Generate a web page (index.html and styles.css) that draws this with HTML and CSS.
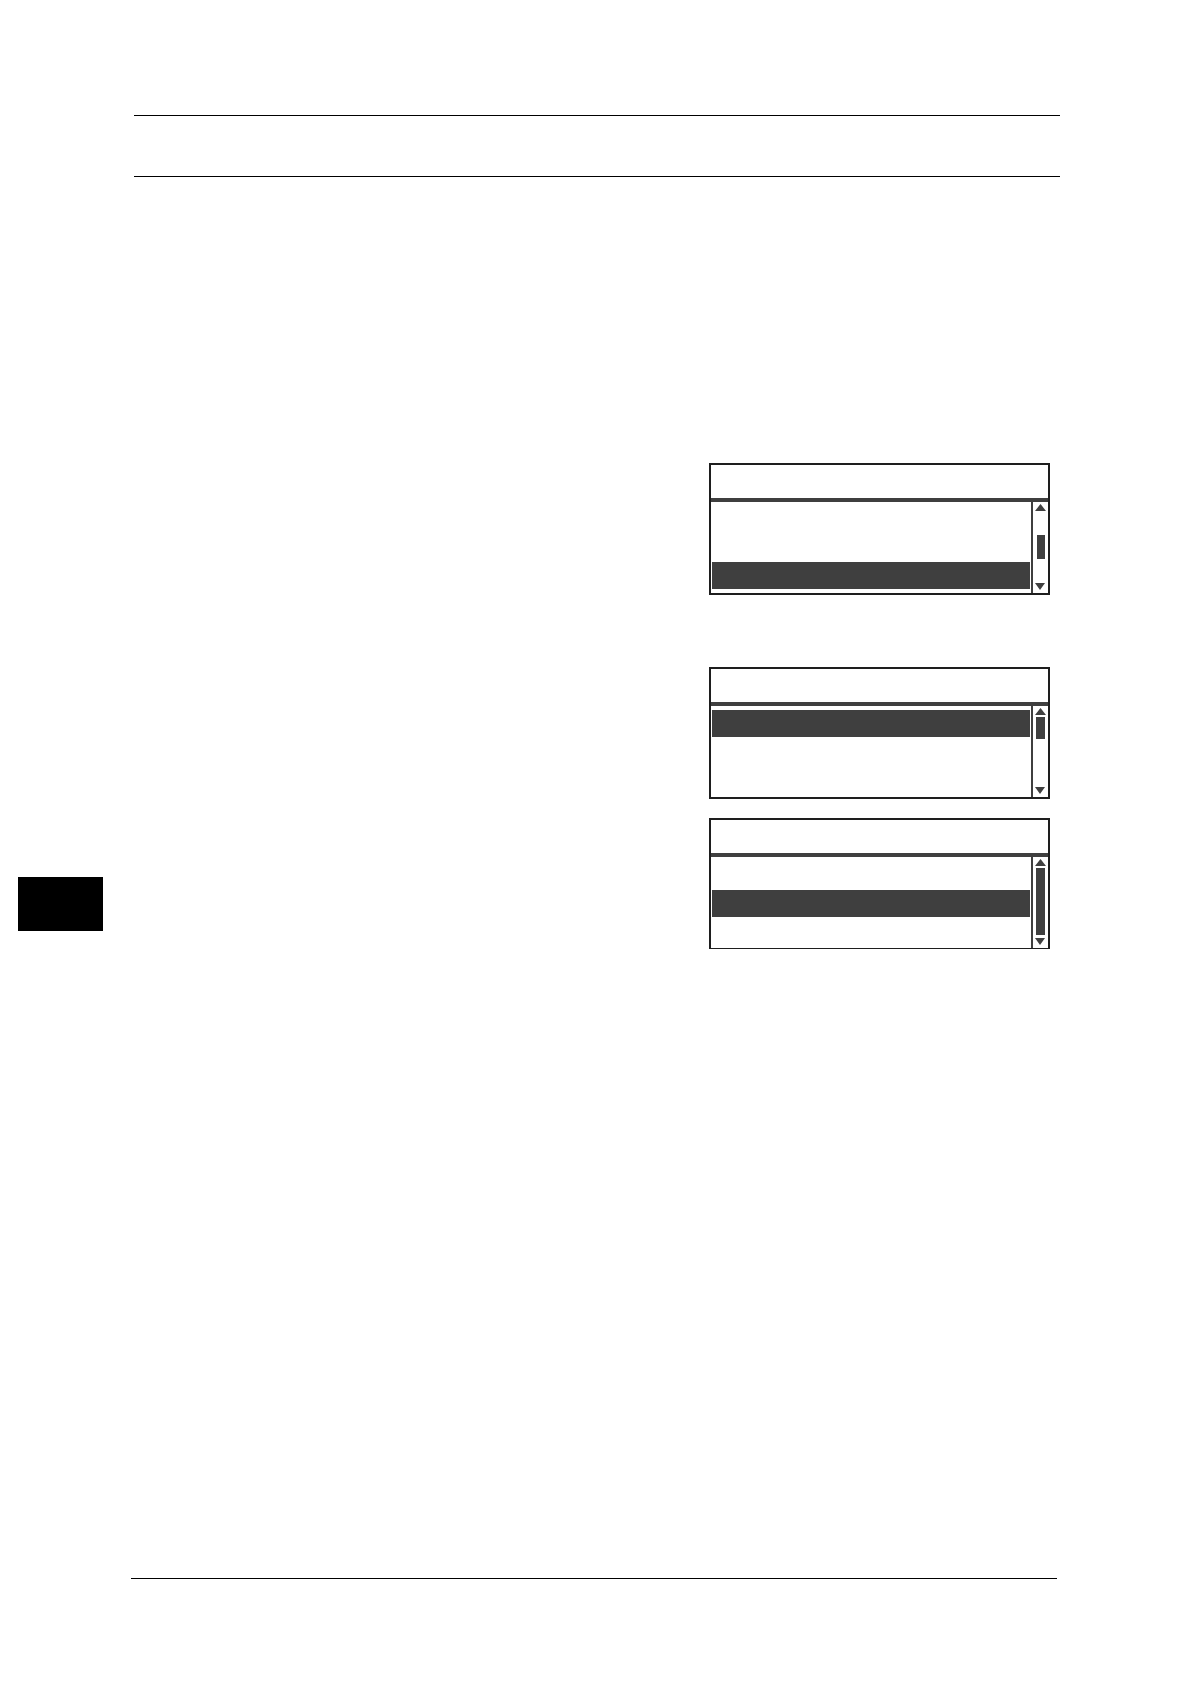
FILE: index.html
```
<!DOCTYPE html>
<html lang="en">
<head>
    <meta charset="UTF-8">
    <meta name="viewport" content="width=device-width, initial-scale=1.0">
    <link rel="stylesheet" href="styles.css">
</head>
<body>
    <header class="page-header"></header>

    <div class="page-body">
        <aside class="chapter-tab"></aside>

        <main class="screens">
            <!-- Last visible row selected -->
            <section class="screen">
                <div class="screen-title"></div>
                <div class="screen-body">
                    <ul class="menu menu-end">
                        <li></li>
                        <li></li>
                        <li class="selected"></li>
                    </ul>
                    <div class="scrollbar">
                        <svg class="arrow" viewBox="0 0 11 7"><path d="M5.5 0L11 7H0z"/></svg>
                        <div class="track"><div class="thumb thumb-middle"></div></div>
                        <svg class="arrow" viewBox="0 0 11 7"><path d="M0 0h10L5 7z"/></svg>
                    </div>
                </div>
            </section>

            <!-- First row selected -->
            <section class="screen screen-next">
                <div class="screen-title"></div>
                <div class="screen-body">
                    <ul class="menu">
                        <li class="selected"></li>
                        <li></li>
                        <li></li>
                    </ul>
                    <div class="scrollbar">
                        <svg class="arrow" viewBox="0 0 11 7"><path d="M5.5 0L11 7H0z"/></svg>
                        <div class="track"><div class="thumb thumb-top"></div></div>
                        <svg class="arrow" viewBox="0 0 11 7"><path d="M0 0h10L5 7z"/></svg>
                    </div>
                </div>
            </section>

            <!-- Second row selected, whole list fits -->
            <section class="screen screen-last">
                <div class="screen-title"></div>
                <div class="screen-body">
                    <ul class="menu">
                        <li></li>
                        <li class="selected"></li>
                        <li></li>
                    </ul>
                    <div class="scrollbar">
                        <svg class="arrow" viewBox="0 0 11 7"><path d="M5.5 0L11 7H0z"/></svg>
                        <div class="track"><div class="thumb thumb-full"></div></div>
                        <svg class="arrow" viewBox="0 0 11 7"><path d="M0 0h10L5 7z"/></svg>
                    </div>
                </div>
            </section>
        </main>
    </div>

    <footer class="page-footer"></footer>
</body>
</html>
```
FILE: styles.css
```
* {
    margin: 0;
    padding: 0;
    box-sizing: border-box;
}

body {
    display: flex;
    flex-direction: column;
    min-height: 100vh;
    padding: 115px 0 105px;
    background: #fff;
    font-family: "Liberation Sans", Arial, sans-serif;
}

.page-header {
    height: 62px;
    margin: 0 130px 0 134px;
    border-top: 1px solid #000;
    border-bottom: 1px solid #000;
}

.page-body {
    display: flex;
    flex: 1;
    justify-content: space-between;
    align-items: flex-start;
    padding: 0 140px 0 18px;
}

.page-footer {
    margin: 0 133px 0 131px;
    border-top: 1px solid #000;
}

.chapter-tab {
    width: 85px;
    height: 54px;
    margin-top: 700px;
    background: #000;
}

/* Printer display panels */
.screens {
    width: 341px;
    padding-top: 286px;
}

.screen {
    border: 2px solid #1e1e1e;
}

.screen-next {
    margin-top: 72px;
}

.screen-last {
    margin-top: 19px;
    border-bottom-width: 1px;
}

.screen-title {
    height: 37px;
    border-bottom: 4px solid #3f3f3f;
}

.screen-body {
    display: flex;
    height: 91px;
}

.menu {
    display: flex;
    flex: 1;
    flex-direction: column;
    gap: 2px;
    padding: 4px 1px;
    list-style: none;
}

.menu-end {
    justify-content: flex-end;
}

.menu li {
    flex: none;
    height: 27px;
}

.menu .selected {
    background: #3f3f3f;
}

.scrollbar {
    display: flex;
    flex-direction: column;
    align-items: center;
    width: 17px;
    padding: 2px 0 3px;
    border-left: 2px solid #3f3f3f;
}

.arrow {
    flex: none;
    width: 11px;
    height: 7px;
    fill: #3f3f3f;
}

.track {
    flex: 1;
    width: 9px;
}

.thumb {
    margin-top: 2px;
    background: #3f3f3f;
}

.thumb-top {
    height: 22px;
}

.thumb-middle {
    width: 8px;
    height: 24px;
    margin: 24px 0 0 auto;
}

.thumb-full {
    height: 67px;
}
```
